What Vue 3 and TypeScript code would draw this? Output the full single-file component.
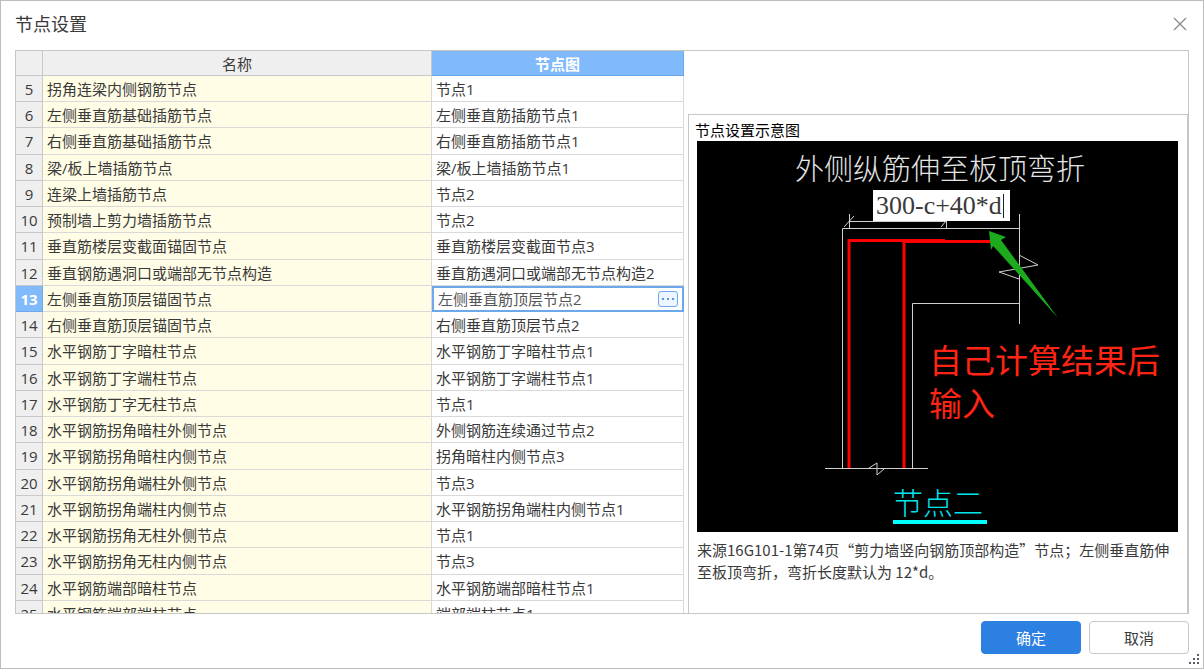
<script setup lang="ts">
import { ref } from 'vue'

interface NodeRow {
  id: number
  name: string
  figure: string
}

const rows = ref<NodeRow[]>([
  { id: 5, name: '拐角连梁内侧钢筋节点', figure: '节点1' },
  { id: 6, name: '左侧垂直筋基础插筋节点', figure: '左侧垂直筋插筋节点1' },
  { id: 7, name: '右侧垂直筋基础插筋节点', figure: '右侧垂直筋插筋节点1' },
  { id: 8, name: '梁/板上墙插筋节点', figure: '梁/板上墙插筋节点1' },
  { id: 9, name: '连梁上墙插筋节点', figure: '节点2' },
  { id: 10, name: '预制墙上剪力墙插筋节点', figure: '节点2' },
  { id: 11, name: '垂直筋楼层变截面锚固节点', figure: '垂直筋楼层变截面节点3' },
  { id: 12, name: '垂直钢筋遇洞口或端部无节点构造', figure: '垂直筋遇洞口或端部无节点构造2' },
  { id: 13, name: '左侧垂直筋顶层锚固节点', figure: '左侧垂直筋顶层节点2' },
  { id: 14, name: '右侧垂直筋顶层锚固节点', figure: '右侧垂直筋顶层节点2' },
  { id: 15, name: '水平钢筋丁字暗柱节点', figure: '水平钢筋丁字暗柱节点1' },
  { id: 16, name: '水平钢筋丁字端柱节点', figure: '水平钢筋丁字端柱节点1' },
  { id: 17, name: '水平钢筋丁字无柱节点', figure: '节点1' },
  { id: 18, name: '水平钢筋拐角暗柱外侧节点', figure: '外侧钢筋连续通过节点2' },
  { id: 19, name: '水平钢筋拐角暗柱内侧节点', figure: '拐角暗柱内侧节点3' },
  { id: 20, name: '水平钢筋拐角端柱外侧节点', figure: '节点3' },
  { id: 21, name: '水平钢筋拐角端柱内侧节点', figure: '水平钢筋拐角端柱内侧节点1' },
  { id: 22, name: '水平钢筋拐角无柱外侧节点', figure: '节点1' },
  { id: 23, name: '水平钢筋拐角无柱内侧节点', figure: '节点3' },
  { id: 24, name: '水平钢筋端部暗柱节点', figure: '水平钢筋端部暗柱节点1' },
  { id: 25, name: '水平钢筋端部端柱节点', figure: '端部端柱节点1' },
])

const selectedId = ref(13)
const bendLength = ref('300-c+40*d')
</script>

<template>
  <main class="dialog" lang="zh-CN">
    <header class="titlebar">
      <h1>节点设置</h1>
      <button class="close" type="button" aria-label="关闭">
        <svg width="14" height="14" viewBox="0 0 14 14" aria-hidden="true">
          <path d="M1 1L13 13M13 1L1 13" fill="none" stroke="#8a8a8a" stroke-width="1.4" />
        </svg>
      </button>
    </header>

    <section class="frame">
      <div class="list">
        <table>
          <colgroup>
            <col class="col-index" />
            <col class="col-name" />
            <col class="col-figure" />
          </colgroup>
          <thead>
            <tr>
              <th></th>
              <th scope="col">名称</th>
              <th scope="col" class="active">节点图</th>
            </tr>
          </thead>
          <tbody>
            <tr v-for="row in rows" :key="row.id" :class="{ selected: row.id === selectedId }">
              <th scope="row">{{ row.id }}</th>
              <td class="name" @click="selectedId = row.id">{{ row.name }}</td>
              <td v-if="row.id === selectedId" class="editing">
                <div class="editor">
                  <input v-model="row.figure" type="text" aria-label="节点图" />
                  <button type="button" aria-label="选择节点图">
                    <i></i><i></i><i></i>
                  </button>
                </div>
              </td>
              <td v-else @click="selectedId = row.id">{{ row.figure }}</td>
            </tr>
          </tbody>
        </table>
      </div>

      <aside class="side">
        <div class="preview">
          <h2>节点设置示意图</h2>
          <div class="drawing">
            <svg viewBox="0 0 481 391" role="img" aria-label="节点二">
              <rect width="481" height="391" fill="#000" />
              <text class="caption" x="98" y="39">外侧纵筋伸至板顶弯折</text>
              <g class="thin">
                <path d="M152.500 73V87M152 80.500H249M249.500 80V87M147 86L157 75M244 86L249 80" />
                <path d="M145.500 327V87.500H322" />
                <path d="M215.500 327V162.500H322" />
                <path d="M322.500 73V183" />
                <path d="M322 114L341 124L302 131L322 138" />
                <path d="M128 327.500H231" />
                <path d="M172 327L180 322V334L187 328" />
              </g>
              <g class="rebar">
                <path d="M152 327V99.500H248" />
                <path d="M207 327V100.500H300" />
              </g>
              <path d="M292 90L309 96L304 99L361 177L299 108L296 105L294 109Z" fill="#1cab1c" />
              <text class="note" x="232" y="232">自己计算结果后</text>
              <text class="note" x="232" y="275">输入</text>
              <text class="label" x="196" y="373">节点二</text>
              <path d="M196 381H290" stroke="#00ffff" stroke-width="4" />
            </svg>
            <label class="value">
              <input v-model="bendLength" type="text" aria-label="弯折长度" />
              <span class="caret"></span>
            </label>
          </div>
          <p>来源16G101-1第74页“剪力墙竖向钢筋顶部构造”节点；左侧垂直筋伸至板顶弯折，弯折长度默认为 12*d。</p>
        </div>
      </aside>
    </section>

    <footer class="actions">
      <button class="primary" type="button">确定</button>
      <button type="button">取消</button>
      <svg class="grip" width="11" height="11" viewBox="0 0 11 11" aria-hidden="true">
        <path
          d="M8 0h2v2h-2zM4 4h2v2h-2zM8 4h2v2h-2zM0 8h2v2h-2zM4 8h2v2h-2zM8 8h2v2h-2z"
          fill="#5c5c66"
        />
      </svg>
    </footer>
  </main>
</template>

<style>
body {
  margin: 0;
}
</style>

<style scoped>
.dialog,
.dialog * {
  box-sizing: border-box;
}

.dialog {
  display: flex;
  flex-direction: column;
  height: 100vh;
  overflow: hidden;
  border: 1px solid #bdbdbd;
  background: #fff;
  color: #3a3a3a;
  font-family: 'Open Sans', 'Noto Sans CJK SC', sans-serif;
  font-size: 15px;
  line-height: 22px;
}

button,
input {
  margin: 0;
  padding: 0;
  border: 0;
  background: none;
  color: inherit;
  font: inherit;
}

.titlebar {
  display: flex;
  flex: none;
  align-items: center;
  justify-content: space-between;
  height: 49px;
  padding: 0 15px 3px 14px;
}

h1 {
  margin: 0;
  font-size: 18px;
  font-weight: 400;
}

.close {
  display: grid;
  place-items: center;
  width: 16px;
  height: 16px;
}

.frame {
  display: grid;
  flex: 1;
  grid-template-columns: minmax(0, 1fr) 504px;
  min-height: 0;
  margin: 0 14px;
  border: 1px solid #c6c6c6;
}

.list {
  min-height: 0;
  overflow: hidden;
}

table {
  width: 100%;
  table-layout: fixed;
  border-collapse: separate;
  border-spacing: 0;
}

.col-index {
  width: 27px;
}

.col-figure {
  width: 252px;
}

th,
td {
  height: 26px;
  padding: 0 4px;
  overflow: hidden;
  border-right: 1px solid #d9d9d9;
  border-bottom: 1px solid #d9d9d9;
  font-weight: 400;
  line-height: 22px;
  text-align: left;
  white-space: nowrap;
}

/* the row grid follows a 105px rhythm for every four rows */
tbody tr:nth-child(4n + 3) > * {
  height: 27px;
}

th {
  border-color: #c8c8c8;
  background: #efefef;
  text-align: center;
}

thead th {
  height: 25px;
  padding-top: 2px;
}

thead th.active {
  border-color: #6ca9ec;
  background: #80bafa;
  color: #fff;
  font-weight: 700;
}

.name {
  background: #fffde6;
}

.selected th {
  border-color: #6ca9ec;
  background: #80bafa;
  color: #fff;
  font-weight: 700;
}

.editing {
  padding: 0;
  border: 0;
}

.editor {
  display: flex;
  align-items: center;
  height: 26px;
  padding: 0 4px;
  border: 2px solid #6ca9ec;
}

.editor input {
  flex: 1;
  min-width: 0;
  height: 22px;
  outline: none;
  color: #555;
}

.editor button {
  display: flex;
  align-items: center;
  justify-content: center;
  gap: 3px;
  width: 20px;
  height: 16px;
  border: 1px solid #6ca9ec;
  border-radius: 3px;
  background: #edf5fe;
}

.editor i {
  width: 2px;
  height: 2px;
  background: #4f97ea;
}

.side {
  display: flex;
  padding: 63px 0 0 4px;
}

.preview {
  flex: 1;
  min-width: 0;
  padding: 4px 9px 0 6px;
  border: 1px solid #c6c6c6;
  border-bottom: 0;
}

h2 {
  margin: 0;
  color: #000;
  font-size: 15px;
  font-weight: 400;
}

.drawing {
  position: relative;
  margin-left: 2px;
}

.drawing > svg {
  display: block;
  width: 100%;
}

.drawing text {
  font-family: 'Noto Sans CJK SC', sans-serif;
  font-weight: 300;
}

.caption {
  fill: #e4e4e4;
  font-size: 29px;
}

.drawing .note {
  fill: #ff2413;
  font-size: 33px;
  font-weight: 400;
}

.label {
  fill: #00e4ec;
  font-size: 30px;
}

.thin path {
  fill: none;
  stroke: #d0d0d0;
  stroke-width: 1;
}

.rebar path {
  fill: none;
  stroke: #f00;
  stroke-width: 3;
}

.value {
  position: absolute;
  top: 49px;
  left: 176px;
  display: flex;
  align-items: center;
  width: 137px;
  height: 31px;
  padding-left: 3px;
  background: #fff;
}

.value input {
  width: 127px;
  outline: none;
  font-family: 'Liberation Serif', serif;
  font-size: 26px;
}

.caret {
  width: 1px;
  height: 24px;
  background: #222;
}

p {
  margin: 7px 0 0 2px;
  font-family: 'Noto Sans CJK SC', sans-serif;
}

.actions {
  position: relative;
  display: flex;
  flex: none;
  justify-content: flex-end;
  gap: 8px;
  padding: 7px 14px 14px;
}

.actions button {
  width: 100px;
  height: 33px;
  border: 1px solid #c8c8c8;
  border-radius: 4px;
  background: #fff;
}

.actions .primary {
  border-color: #2b80e2;
  background: #2b80e2;
  color: #fff;
}

.grip {
  position: absolute;
  right: 3px;
  bottom: 3px;
}
</style>
